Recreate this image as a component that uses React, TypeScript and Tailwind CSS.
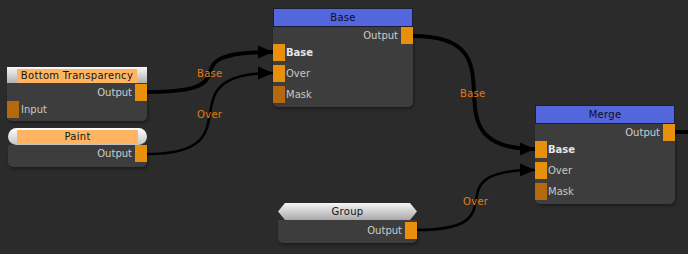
import React from "react";

const PORT = "bg-[#e8900c]";
const MASK = "bg-[#b5680c]";

function Port({ mask = false, cls = "" }: { mask?: boolean; cls?: string }) {
  return <div className={`w-[12px] h-[17px] shrink-0 ${mask ? MASK : PORT} ${cls}`} />;
}

function OutputRow() {
  return (
    <div className="h-[17px] flex items-center justify-end">
      <span className="mr-[3px] text-[10px] leading-none text-[#cccccc]">Output</span>
      <Port />
    </div>
  );
}

function BlueNode({ pos, title }: { pos: string; title: string }) {
  return (
    <div className={`absolute w-[140px] ${pos}`}>
      <div className="h-[19px] bg-[#5366db] border border-[#1c1e36] flex items-center justify-center text-[10px] tracking-[0.3px] text-[#0d0d24]">
        {title}
      </div>
      <div className="bg-[#3d3d3d] rounded-b-[5px] pb-[4px] shadow-[1px_2px_3px_rgba(0,0,0,0.35)]">
        <OutputRow />
        <div className="flex flex-col gap-[4px]">
          <div className="h-[17px] flex items-center">
            <Port />
            <span className="ml-[1px] text-[10px] font-bold text-[#e6e6e6]">Base</span>
          </div>
          <div className="h-[17px] flex items-center">
            <Port />
            <span className="ml-[1px] text-[10px] text-[#c8c8c8]">Over</span>
          </div>
          <div className="h-[17px] flex items-center">
            <Port mask />
            <span className="ml-[1px] text-[10px] text-[#c8c8c8]">Mask</span>
          </div>
        </div>
      </div>
    </div>
  );
}

function Wire({ d, w }: { d: string; w: number }) {
  return <path d={d} fill="none" stroke="#000" strokeWidth={w} />;
}

function Arrow({ x, y }: { x: number; y: number }) {
  return <polygon points={`${x},${y} ${x - 15},${y - 6.5} ${x - 15},${y + 6.5}`} fill="#000" />;
}

export default function App() {
  return (
    <div className="relative w-[688px] h-[254px] overflow-hidden bg-[#2b2b2b] font-['DejaVu_Sans',Verdana,sans-serif]">
      <svg className="absolute left-0 top-0" width="688" height="254" viewBox="0 0 688 254">
        <Wire d="M147,92 C260,92 160,52 273,52" w={4} />
        <Arrow x={273} y={52} />
        <Wire d="M147,154 C260,154 160,73 273,73" w={2.5} />
        <Arrow x={273} y={73} />
        <Wire d="M413,36 C530,36 418,149 535,149" w={4} />
        <Arrow x={535} y={149} />
        <Wire d="M417,230 C525,230 427,170 535,170" w={2.5} />
        <Arrow x={535} y={170} />
        <Wire d="M675,132 L690,132" w={4} />
        <g fontFamily="DejaVu Sans, Verdana, sans-serif" fontSize="10" fill="#e57a12" letterSpacing="0.3">
          <text x="197" y="77">Base</text>
          <text x="197" y="118">Over</text>
          <text x="460" y="97">Base</text>
          <text x="463" y="205">Over</text>
        </g>
      </svg>

      <BlueNode pos="left-[273px] top-[8px]" title="Base" />
      <BlueNode pos="left-[535px] top-[105px]" title="Merge" />

      {/* Bottom Transparency */}
      <div className="absolute left-[7px] top-[67px] w-[140px]">
        <div className="h-[16px] bg-linear-to-b from-[#f4f4f4] to-[#b2b2b2] border-t border-[#f8f8f8] flex items-center px-[10px]">
          <div className="w-full h-[14px] bg-[#ffb462] flex items-center justify-center text-[10px] tracking-[0.3px] text-[#141414]">
            Bottom Transparency
          </div>
        </div>
        <div className="bg-[#3d3d3d] rounded-b-[5px] pb-[3px] shadow-[1px_2px_3px_rgba(0,0,0,0.35)]">
          <div className="pt-[1px]">
            <OutputRow />
          </div>
          <div className="h-[17px] flex items-center">
            <Port mask />
            <span className="ml-[2px] text-[10px] text-[#c8c8c8]">Input</span>
          </div>
        </div>
      </div>

      {/* Paint */}
      <div className="absolute left-[8px] top-[128px] w-[139px]">
        <div className="h-[17px] rounded-full bg-linear-to-b from-[#ffffff] to-[#c4c4c4] flex items-center px-[9px]">
          <div className="w-full h-[14px] bg-[#ffb462] flex items-center justify-center text-[10px] tracking-[0.3px] text-[#141414]">
            Paint
          </div>
        </div>
        <div className="bg-[#3d3d3d] rounded-b-[5px] pb-[5px] shadow-[1px_2px_3px_rgba(0,0,0,0.35)]">
          <OutputRow />
        </div>
      </div>

      {/* Group */}
      <div className="absolute left-[278px] top-[203px] w-[139px]">
        <div className="h-[17px] bg-linear-to-b from-[#f6f6f6] to-[#a9a9a9] [clip-path:polygon(7px_0,calc(100%-7px)_0,100%_50%,calc(100%-7px)_100%,7px_100%,0_50%)] flex items-center justify-center text-[10px] tracking-[0.3px] text-[#141414]">
          Group
        </div>
        <div className="bg-[#3d3d3d] rounded-b-[5px] pt-[2px] pb-[4px] shadow-[1px_2px_3px_rgba(0,0,0,0.35)]">
          <OutputRow />
        </div>
      </div>
    </div>
  );
}
